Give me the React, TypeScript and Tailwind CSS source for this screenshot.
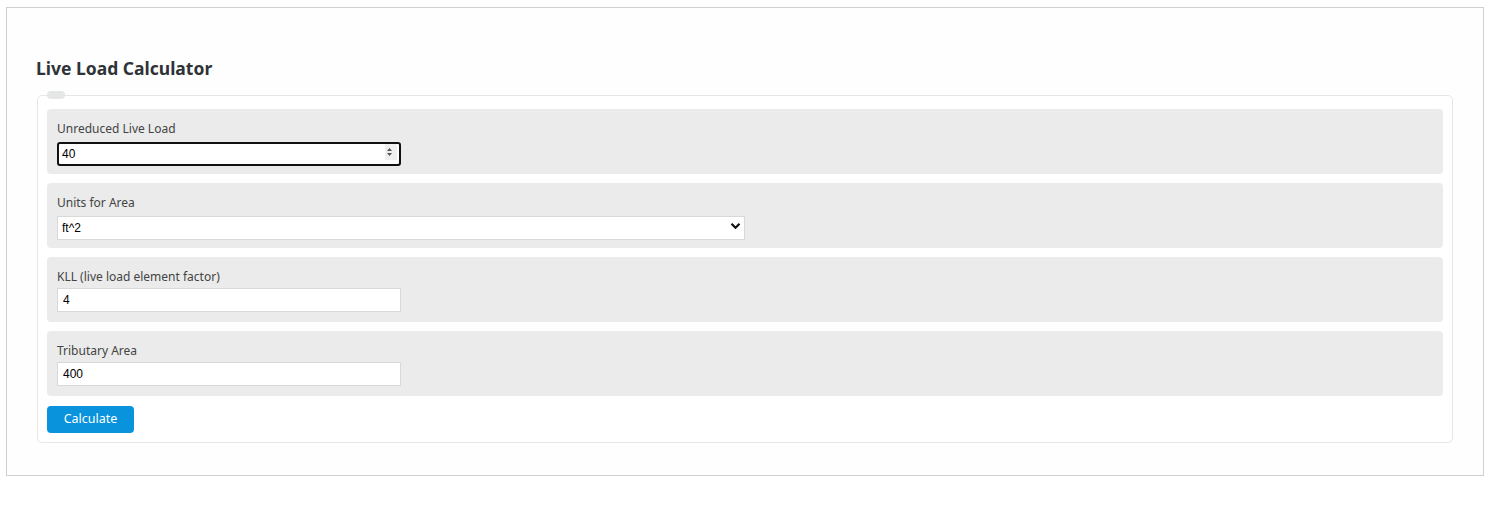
import { useState } from "react";

const FIELDS = [
  { key: "load", label: "Unreduced Live Load", value: "40", kind: "focused" },
  { key: "units", label: "Units for Area", value: "ft^2", kind: "select" },
  { key: "kll", label: "KLL (live load element factor)", value: "4", kind: "text" },
  { key: "area", label: "Tributary Area", value: "400", kind: "text" },
];

const labelFont = { fontFamily: '"Noto Sans", "Open Sans", sans-serif' };
const inputFont = { fontFamily: '"Liberation Sans", Arial, sans-serif' };

function Spinner() {
  return (
    <svg width="7" height="10" viewBox="0 0 7 10" className="absolute right-[8px] top-1/2 -translate-y-1/2">
      <path d="M3.5 1 L6 4 L1 4 Z" fill="#555" />
      <path d="M3.5 9 L6 6 L1 6 Z" fill="#555" />
    </svg>
  );
}

function Chevron() {
  return (
    <svg width="11" height="8" viewBox="0 0 11 8" className="absolute right-[4px] top-1/2 -translate-y-1/2 pointer-events-none">
      <path d="M1.5 1.8 L5.5 5.8 L9.5 1.8" stroke="#111" strokeWidth="2.2" fill="none" />
    </svg>
  );
}

export default function App() {
  const [vals, setVals] = useState<Record<string, string>>(
    Object.fromEntries(FIELDS.map((f) => [f.key, f.value]))
  );
  const set = (k: string, v: string) => setVals((p) => ({ ...p, [k]: v }));

  return (
    <div className="bg-white min-h-[517px] pt-[7px] pl-[6px] pr-[8px]">
      <div className="border border-[#cfcfcf] bg-[#fefefe] pt-[50px] px-[30px] pb-[32px]" style={labelFont}>
        <h2 className="text-[17.5px] leading-[24px] font-bold text-[#2f3337] mb-[13px] -ml-[1px] -mt-[2px] pb-[2px]">
          Live Load Calculator
        </h2>
        <div className="relative border border-[#e6e6e6] rounded-[5px] bg-white pt-[13px] px-[9px] pb-[9px]">
          <div className="absolute left-[9px] -top-[5px] w-[18px] h-[8px] rounded-full bg-[#e5e6e6]" />
          <div className="flex flex-col gap-[9px]">
            {FIELDS.map((f) => (
              <div key={f.key} className="bg-[#eaebea] rounded-[4px] pt-[10px] pb-[10px] px-[10px]">
                <label className="block text-[12px] leading-[20px] text-[#444] mb-[1px]">{f.label}</label>
                {f.kind === "select" ? (
                  <div className="relative w-[688px] h-[24px]">
                    <select
                      value={vals[f.key]}
                      onChange={(e) => set(f.key, e.target.value)}
                      className="appearance-none w-full h-full bg-white border border-[#d9d9d9] pl-[4px] text-[12px] text-black outline-none"
                      style={inputFont}
                    >
                      <option>ft^2</option>
                      <option>m^2</option>
                    </select>
                    <Chevron />
                  </div>
                ) : f.kind === "focused" ? (
                  <div className="relative w-[344px] h-[24px]">
                    <input
                      value={vals[f.key]}
                      onChange={(e) => set(f.key, e.target.value)}
                      className="w-full h-full bg-white border-2 border-[#111] rounded-[3px] pl-[3px] text-[12px] text-black outline-none"
                      style={inputFont}
                    />
                    <div className="absolute right-[4px] top-[4px] w-[12px] h-[16px] bg-[#f0f0f0]" />
                    <Spinner />
                  </div>
                ) : (
                  <input
                    value={vals[f.key]}
                    onChange={(e) => set(f.key, e.target.value)}
                    className="block w-[344px] h-[24px] bg-white border border-[#d9d9d9] pl-[5px] text-[12px] text-black outline-none"
                    style={inputFont}
                  />
                )}
              </div>
            ))}
          </div>
          <button className="block mt-[10px] w-[87px] h-[27px] rounded-[4px] bg-[#0993dc] text-white text-[12.5px]">
            Calculate
          </button>
        </div>
      </div>
    </div>
  );
}
